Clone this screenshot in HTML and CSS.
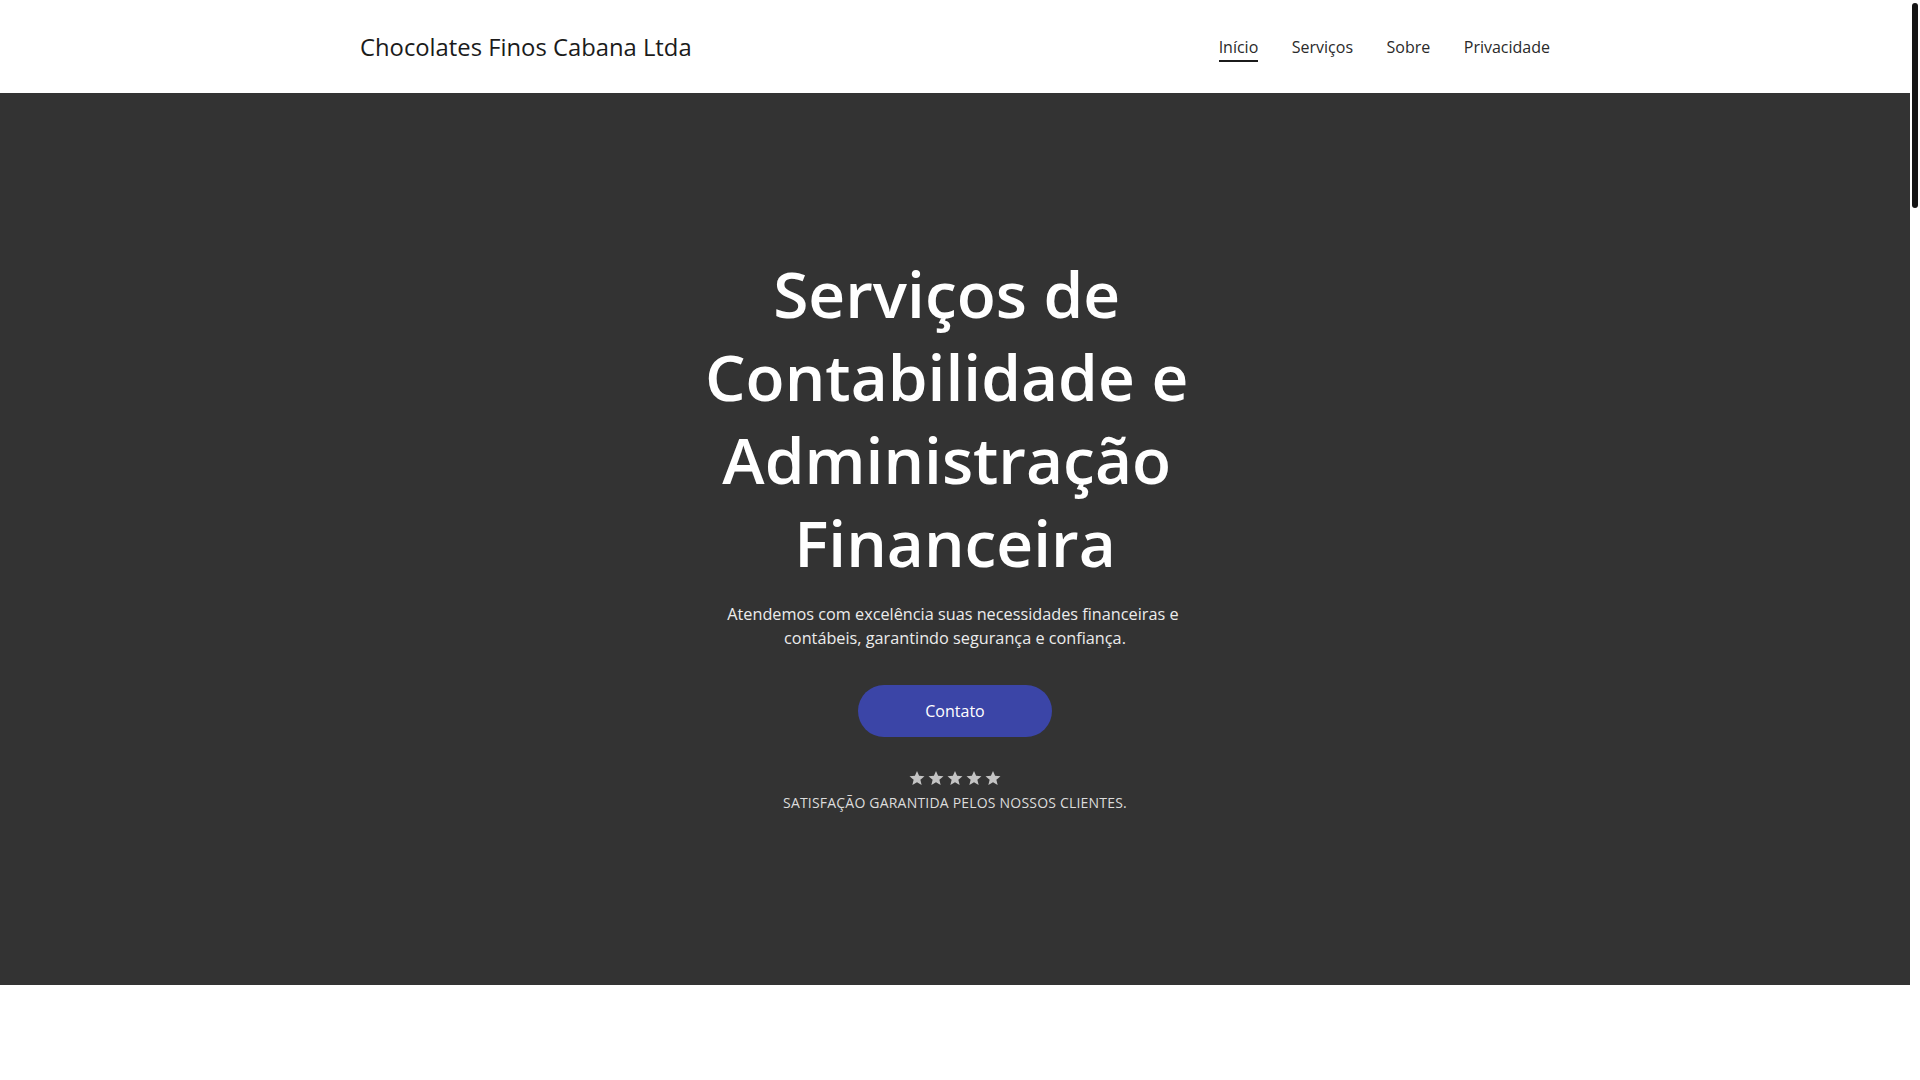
FILE: index.html
```html
<!DOCTYPE html>
<html lang="pt-BR">
<head>
<meta charset="utf-8">
<title>Chocolates Finos Cabana Ltda</title>
<link rel="stylesheet" href="styles.css">
</head>
<body>
<div class="page">
  <header class="site-header">
    <div class="container header-inner">
      <a class="brand" href="#">Chocolates Finos Cabana Ltda</a>
      <nav class="nav">
        <a class="nav-link active" href="#">Início</a>
        <a class="nav-link" href="#">Serviços</a>
        <a class="nav-link" href="#">Sobre</a>
        <a class="nav-link" href="#">Privacidade</a>
      </nav>
    </div>
  </header>
  <section class="hero">
    <div class="hero-content">
      <h1 class="hero-title">Serviços de Contabilidade e Administração Financeira</h1>
      <p class="hero-text">Atendemos com excelência suas necessidades financeiras e contábeis, garantindo segurança e confiança.</p>
      <a class="btn" href="#">Contato</a>
      <div class="stars" aria-label="5 estrelas">
        <svg class="star" viewBox="0 0 24 24"><path d="M12 2.5l2.8 6.6 7.2.6-5.5 4.7 1.7 7-6.2-3.8-6.2 3.8 1.7-7L2 9.7l7.2-.6z"/></svg>
        <svg class="star" viewBox="0 0 24 24"><path d="M12 2.5l2.8 6.6 7.2.6-5.5 4.7 1.7 7-6.2-3.8-6.2 3.8 1.7-7L2 9.7l7.2-.6z"/></svg>
        <svg class="star" viewBox="0 0 24 24"><path d="M12 2.5l2.8 6.6 7.2.6-5.5 4.7 1.7 7-6.2-3.8-6.2 3.8 1.7-7L2 9.7l7.2-.6z"/></svg>
        <svg class="star" viewBox="0 0 24 24"><path d="M12 2.5l2.8 6.6 7.2.6-5.5 4.7 1.7 7-6.2-3.8-6.2 3.8 1.7-7L2 9.7l7.2-.6z"/></svg>
        <svg class="star" viewBox="0 0 24 24"><path d="M12 2.5l2.8 6.6 7.2.6-5.5 4.7 1.7 7-6.2-3.8-6.2 3.8 1.7-7L2 9.7l7.2-.6z"/></svg>
      </div>
      <p class="hero-caption">SATISFAÇÃO GARANTIDA PELOS NOSSOS CLIENTES.</p>
    </div>
  </section>
  <section class="below"></section>
</div>
<div class="scrollbar" aria-hidden="true"><div class="scrollbar-thumb"></div></div>
</body>
</html>
```

FILE: styles.css
```css
html {
  background: #ffffff;
  scrollbar-width: none;
}
::-webkit-scrollbar {
  display: none;
}
body {
  margin: 0;
  font-family: "Open Sans", "Noto Sans", sans-serif;
  color: #1b1b1b;
  background: #ffffff;
}
a {
  text-decoration: none;
  color: inherit;
}
.page {
  margin-right: 10px;
}
.scrollbar {
  position: fixed;
  top: 0;
  right: 0;
  width: 10px;
  height: 100vh;
  background: #ffffff;
}
.scrollbar-thumb {
  position: absolute;
  top: 3px;
  left: 2px;
  width: 6px;
  height: 205px;
  border-radius: 3px;
  background: #151515;
}
.container {
  width: 1190px;
  margin: 0 auto;
}
.site-header {
  height: 93px;
  background: #ffffff;
}
.header-inner {
  height: 100%;
  display: flex;
  align-items: center;
  justify-content: space-between;
}
.brand {
  font-size: 23.8px;
  line-height: 1.2;
  color: #1b1b1b;
  padding-top: 1px;
}
.nav {
  display: flex;
  align-items: center;
  gap: 33.5px;
}
.nav-link {
  font-size: 16px;
  line-height: 26px;
  color: #2a2a2a;
  border-bottom: 2px solid transparent;
  margin-top: 3px;
}
.nav-link.active {
  border-bottom-color: #1b1b1b;
}
.hero {
  background: #333333;
  height: 892px;
  box-sizing: border-box;
  padding-top: 158.5px;
  display: flex;
  justify-content: center;
}
.hero-content {
  width: 560px;
  display: flex;
  flex-direction: column;
  align-items: center;
  text-align: center;
}
.hero-title {
  margin: 0;
  font-size: 64px;
  line-height: 83.3px;
  font-weight: 600;
  color: #ffffff;
  white-space: break-spaces;
}
.hero-text {
  max-width: 480px;
  margin: 17px 0 0;
  font-size: 16.25px;
  line-height: 24px;
  color: #ececec;
  white-space: break-spaces;
}
.btn {
  margin-top: 35px;
  width: 194px;
  height: 52px;
  border-radius: 26px;
  background: #3b45a7;
  color: #ffffff;
  font-size: 16px;
  display: flex;
  align-items: center;
  justify-content: center;
}
.stars {
  margin-top: 32px;
  display: flex;
  gap: 1px;
}
.star {
  width: 18px;
  height: 18px;
  fill: #c4c4c4;
}
.hero-caption {
  margin: 6px 0 0;
  font-size: 14px;
  line-height: 20px;
  letter-spacing: 0.2px;
  color: #dcdcdc;
}
.below {
  height: 4600px;
  background: #ffffff;
}
```
